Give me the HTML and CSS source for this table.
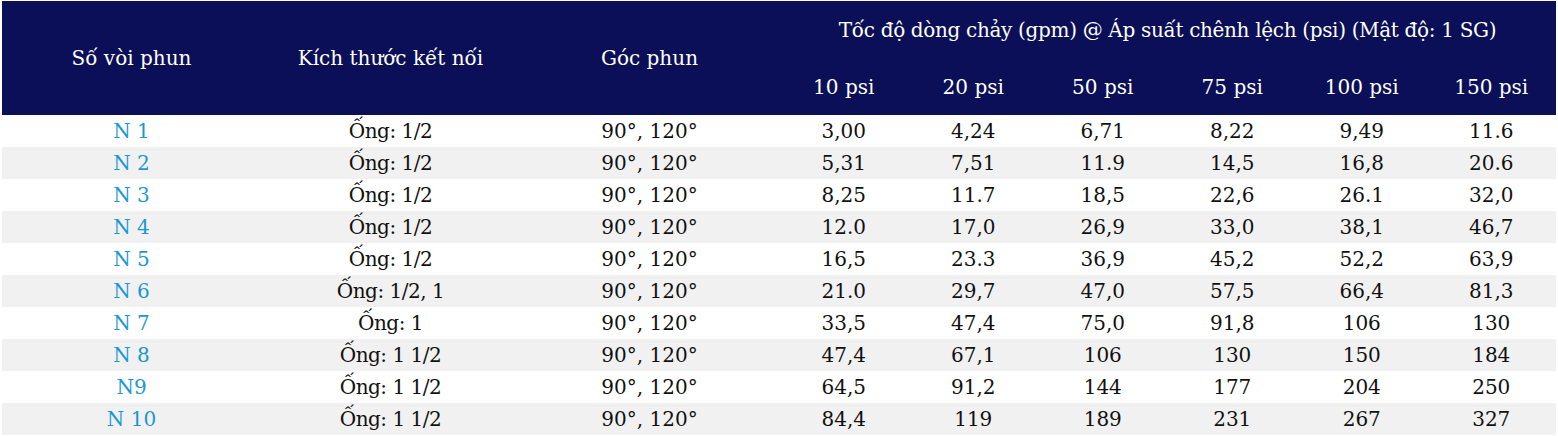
FILE: index.html
```html
<!DOCTYPE html>
<html lang="vi">
<head>
<meta charset="utf-8">
<title>Bảng vòi phun</title>
<link rel="stylesheet" href="styles.css">
</head>
<body>
<div class="table">
  <div class="head">
    <div class="hcell h-main span-rows">Số vòi phun</div>
    <div class="hcell h-main span-rows">Kích thước kết nối</div>
    <div class="hcell h-main span-rows">Góc phun</div>
    <div class="hcell h-group">Tốc độ dòng chảy (gpm) @ Áp suất chênh lệch (psi) (Mật độ: 1 SG)</div>
    <div class="hcell h-sub">10 psi</div>
    <div class="hcell h-sub">20 psi</div>
    <div class="hcell h-sub">50 psi</div>
    <div class="hcell h-sub">75 psi</div>
    <div class="hcell h-sub">100 psi</div>
    <div class="hcell h-sub">150 psi</div>
  </div>
  <div class="row"><div class="cell id">N 1</div><div class="cell pipe">Ống: 1/2</div><div class="cell">90°, 120°</div><div class="cell">3,00</div><div class="cell">4,24</div><div class="cell">6,71</div><div class="cell">8,22</div><div class="cell">9,49</div><div class="cell">11.6</div></div>
  <div class="row"><div class="cell id">N 2</div><div class="cell pipe">Ống: 1/2</div><div class="cell">90°, 120°</div><div class="cell">5,31</div><div class="cell">7,51</div><div class="cell">11.9</div><div class="cell">14,5</div><div class="cell">16,8</div><div class="cell">20.6</div></div>
  <div class="row"><div class="cell id">N 3</div><div class="cell pipe">Ống: 1/2</div><div class="cell">90°, 120°</div><div class="cell">8,25</div><div class="cell">11.7</div><div class="cell">18,5</div><div class="cell">22,6</div><div class="cell">26.1</div><div class="cell">32,0</div></div>
  <div class="row"><div class="cell id">N 4</div><div class="cell pipe">Ống: 1/2</div><div class="cell">90°, 120°</div><div class="cell">12.0</div><div class="cell">17,0</div><div class="cell">26,9</div><div class="cell">33,0</div><div class="cell">38,1</div><div class="cell">46,7</div></div>
  <div class="row"><div class="cell id">N 5</div><div class="cell pipe">Ống: 1/2</div><div class="cell">90°, 120°</div><div class="cell">16,5</div><div class="cell">23.3</div><div class="cell">36,9</div><div class="cell">45,2</div><div class="cell">52,2</div><div class="cell">63,9</div></div>
  <div class="row"><div class="cell id">N 6</div><div class="cell pipe">Ống: 1/2, 1</div><div class="cell">90°, 120°</div><div class="cell">21.0</div><div class="cell">29,7</div><div class="cell">47,0</div><div class="cell">57,5</div><div class="cell">66,4</div><div class="cell">81,3</div></div>
  <div class="row"><div class="cell id">N 7</div><div class="cell pipe">Ống: 1</div><div class="cell">90°, 120°</div><div class="cell">33,5</div><div class="cell">47,4</div><div class="cell">75,0</div><div class="cell">91,8</div><div class="cell">106</div><div class="cell">130</div></div>
  <div class="row"><div class="cell id">N 8</div><div class="cell pipe">Ống: 1 1/2</div><div class="cell">90°, 120°</div><div class="cell">47,4</div><div class="cell">67,1</div><div class="cell">106</div><div class="cell">130</div><div class="cell">150</div><div class="cell">184</div></div>
  <div class="row"><div class="cell id">N9</div><div class="cell pipe">Ống: 1 1/2</div><div class="cell">90°, 120°</div><div class="cell">64,5</div><div class="cell">91,2</div><div class="cell">144</div><div class="cell">177</div><div class="cell">204</div><div class="cell">250</div></div>
  <div class="row"><div class="cell id">N 10</div><div class="cell pipe">Ống: 1 1/2</div><div class="cell">90°, 120°</div><div class="cell">84,4</div><div class="cell">119</div><div class="cell">189</div><div class="cell">231</div><div class="cell">267</div><div class="cell">327</div></div>
</div>
</body>
</html>
```
FILE: styles.css
```css
html, body {
  margin: 0;
  padding: 0;
  background: #ffffff;
}
body {
  padding: 1px 2px 0 2px;
  font-family: "Roboto Slab", "DejaVu Serif", serif;
  font-size: 20px;
  color: #111111;
}
.table {
  width: 1554px;
}
.head {
  display: grid;
  grid-template-columns: 2fr 2fr 2fr repeat(6, 1fr);
  grid-template-rows: 57px 57px;
  background: #0a0f57;
  color: #ffffff;
}
.hcell {
  display: flex;
  align-items: center;
  justify-content: center;
  white-space: nowrap;
}
.span-rows {
  grid-row: 1 / 3;
}
.h-group {
  grid-column: 4 / 10;
  grid-row: 1;
  letter-spacing: -0.33px;
}
.h-sub {
  grid-row: 2;
}
.row {
  display: grid;
  grid-template-columns: 2fr 2fr 2fr repeat(6, 1fr);
  height: 32px;
}
.row:nth-child(odd) {
  background: #f1f1f1;
}
.cell {
  display: flex;
  align-items: center;
  justify-content: center;
  white-space: nowrap;
}
.cell.pipe {
  letter-spacing: -0.5px;
}
.cell.id {
  color: #1a98d5;
}
```
